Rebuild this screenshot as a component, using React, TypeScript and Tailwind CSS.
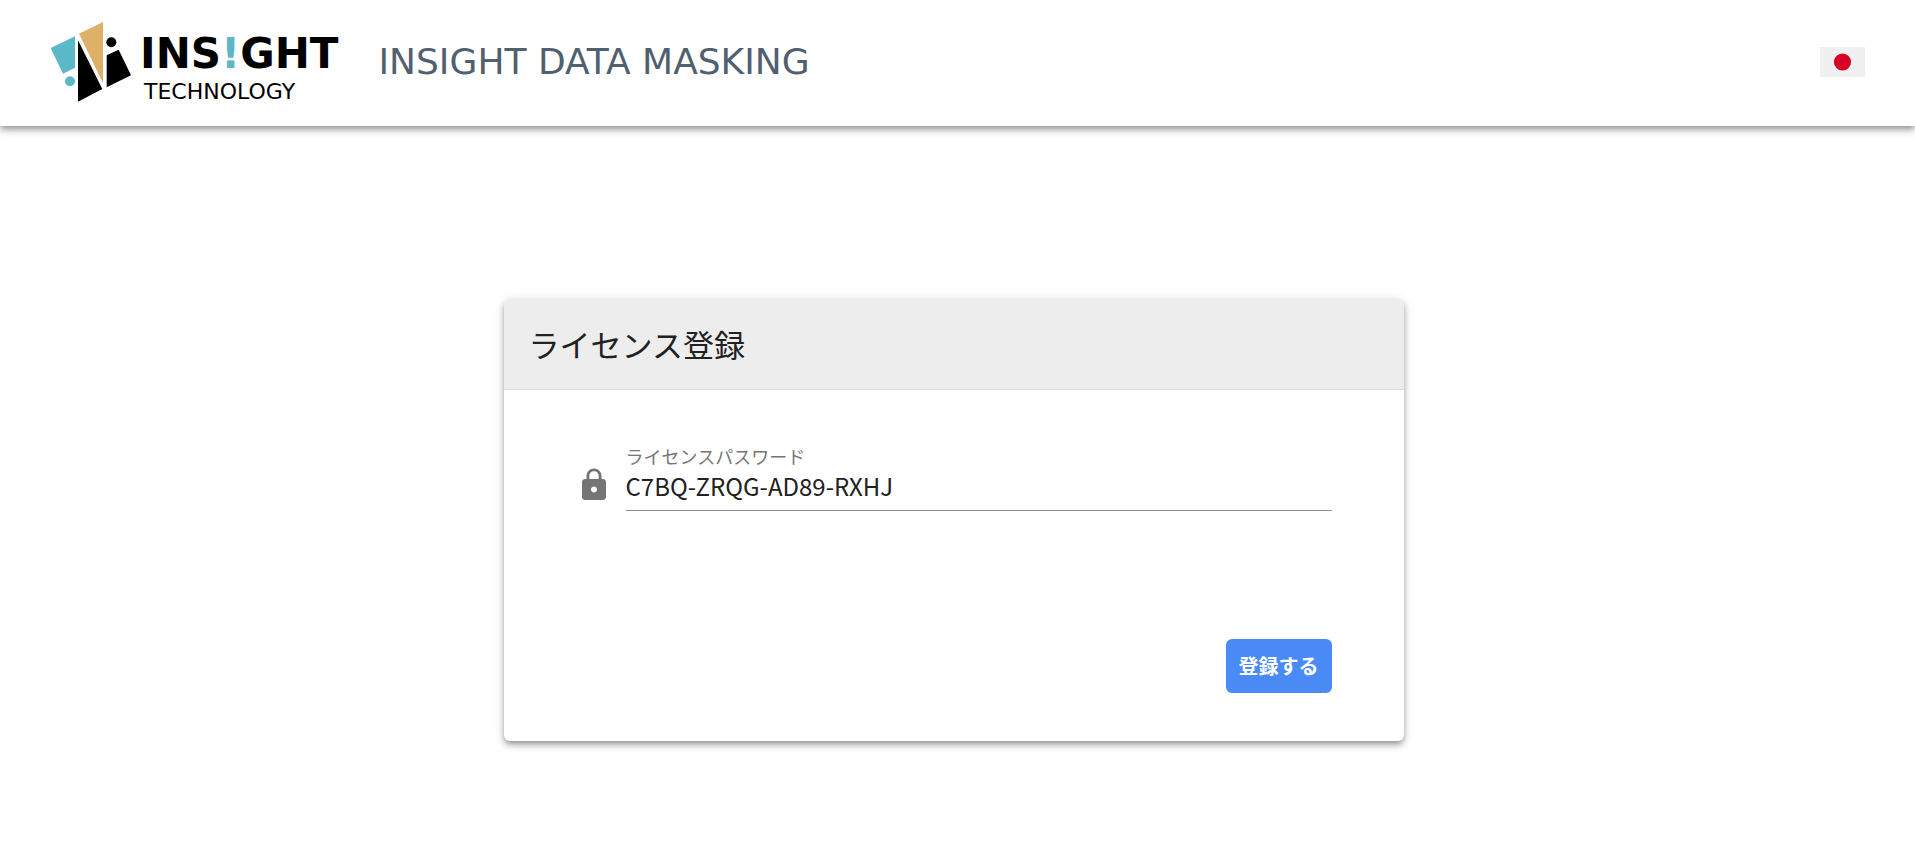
import { useState } from "react"
import { MdLock } from "react-icons/md"

function BrandMark() {
    return (
        <svg viewBox="15 18 246 246" className="size-[82px] shrink-0" aria-hidden="true">
            <polygon points="17,99 90,64 90,158 54,176" fill="#5bb8c8" />
            <circle cx="75" cy="199" r="15" fill="#5bb8c8" />
            <polygon points="102,56 174,21 174,205" fill="#deb06a" />
            <polygon points="99,76 172,222 99,260" fill="#000" />
            <circle cx="199" cy="82" r="15" fill="#000" />
            <polygon points="185,121 221,104 258,181 185,217" fill="#000" />
        </svg>
    )
}

function JapanFlag() {
    return (
        <svg viewBox="0 0 45 30" className="h-[30px] w-[45px]" aria-hidden="true">
            <rect width="45" height="30" fill="#f0f0f0" />
            <circle cx="22.5" cy="15" r="8.6" fill="#d80027" />
        </svg>
    )
}

function AppHeader() {
    return (
        <header className="flex h-[126px] items-center bg-white px-[50px] pb-[2px] shadow-[0_3px_5px_-1px_rgba(0,0,0,0.25),0_5px_7px_0_rgba(0,0,0,0.17),0_1px_12px_0_rgba(0,0,0,0.12)]">
            <a href="#" className="flex items-center gap-2 font-['DejaVu_Sans',sans-serif] text-black">
                <BrandMark />
                <span className="flex flex-col pt-[10px]">
                    <span className="text-[42px] leading-[50px] font-bold">
                        INS<span className="text-[#5bb8c8]">!</span>GHT
                    </span>
                    <span className="pl-1 text-[22px] leading-[26px]">TECHNOLOGY</span>
                </span>
            </a>
            <h1 className="ml-10 font-['DejaVu_Sans',sans-serif] text-[36px] leading-[40px] whitespace-nowrap text-[#50606f]">
                INSIGHT DATA MASKING
            </h1>
            <button type="button" aria-label="日本語" className="ml-auto">
                <JapanFlag />
            </button>
        </header>
    )
}

function LicenseCard() {
    const [password, setPassword] = useState("C7BQ-ZRQG-AD89-RXHJ")

    return (
        <section className="w-full max-w-[900px] overflow-hidden rounded-md bg-white shadow-[0_3px_5px_-1px_rgba(0,0,0,0.25),0_5px_7px_0_rgba(0,0,0,0.17),0_1px_12px_0_rgba(0,0,0,0.12)]">
            <h2 className="border-b border-[#dcdcdc] bg-[#ededed] px-[25px] py-6 text-[31px] leading-[42px] text-[#212121]">
                ライセンス登録
            </h2>
            <form className="px-[72px] pt-[54px] pb-12" onSubmit={(e) => e.preventDefault()}>
                <div className="flex items-end gap-[14px]">
                    <MdLock className="mb-2 size-9 shrink-0 text-[#757575]" />
                    <div className="flex grow flex-col border-b border-[#8c8c8c]">
                        <label htmlFor="license" className="text-[18px] leading-6 text-[#757575]">
                            ライセンスパスワード
                        </label>
                        <input
                            id="license"
                            type="text"
                            value={password}
                            onChange={(e) => setPassword(e.target.value)}
                            className="h-[42px] w-full pb-2 text-[24px] text-[#212121] outline-none"
                        />
                    </div>
                </div>
                <div className="mt-32 flex justify-end">
                    <button
                        type="submit"
                        className="h-[54px] rounded-md bg-[#4a8af4] px-[13px] text-[20px] font-bold text-white"
                    >
                        登録する
                    </button>
                </div>
            </form>
        </section>
    )
}

export default function App() {
    return (
        <div className="min-h-screen bg-white font-['Noto_Sans_CJK_JP',sans-serif]">
            <AppHeader />
            <main className="flex justify-center pt-[173px] pr-2">
                <LicenseCard />
            </main>
        </div>
    )
}
